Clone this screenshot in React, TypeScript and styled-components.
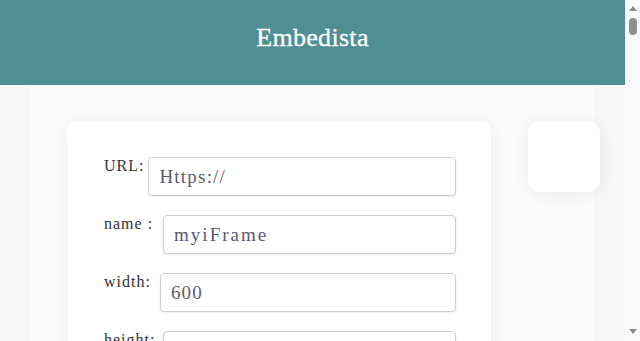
import React from "react";
import styled, { createGlobalStyle } from "styled-components";

const Global = createGlobalStyle`
  html, body { margin: 0; padding: 0; height: 100%; overflow: hidden; }
  body {
    background: #f7f7f7;
    font-family: "Liberation Serif", "DejaVu Serif", serif;
    color: #333;
  }
  #root { height: 100%; }
`;

const Page = styled.div`
  height: 100vh;
  display: flex;
`;

const Content = styled.div`
  flex: 1;
  min-width: 0;
  overflow: hidden;
`;

const ScrollTrack = styled.div`
  flex: none;
  width: 15px;
  background: #fafafa;
  display: flex;
  flex-direction: column;
  align-items: center;
  padding: 6px 0 7px;
  box-sizing: border-box;
`;

const Arrow = styled.div<{ $down?: boolean }>`
  width: 0;
  height: 0;
  border-left: 4px solid transparent;
  border-right: 4px solid transparent;
  ${(p) =>
    p.$down
      ? "border-top: 5px solid #8a8a8a; margin-top: auto;"
      : "border-bottom: 5px solid #8a8a8a;"}
`;

const Thumb = styled.div`
  width: 8px;
  height: 17px;
  margin-top: 7px;
  border-radius: 4px;
  background: #8f8f8f;
`;

const Header = styled.header`
  height: 85px;
  background: #4f8f94;
  display: flex;
  justify-content: center;
  align-items: center;
`;

const Title = styled.h1`
  margin: 0 0 9px 0;
  font-weight: 400;
  font-size: 26px;
  color: #fff;
  letter-spacing: 0.3px;
  -webkit-text-stroke: 0.3px #fff;
`;

const Main = styled.main`
  margin: 0 31px;
  background: #fbfbfb;
  padding-top: 36px;
  min-height: 700px;
  display: flex;
  align-items: flex-start;
  gap: 37px;
`;

const Card = styled.section`
  margin-left: 36px;
  width: 424px;
  flex: none;
  box-sizing: border-box;
  background: #fff;
  border-radius: 10px;
  box-shadow: 0 2px 18px rgba(0, 0, 0, 0.06);
  padding: 36px 35px 36px 37px;
  display: flex;
  flex-direction: column;
  gap: 19px;
`;

const Side = styled.aside`
  flex: none;
  width: 72px;
  height: 71px;
  background: #fff;
  border-radius: 12px;
  box-shadow: 0 2px 18px rgba(0, 0, 0, 0.07);
`;

const Row = styled.div`
  display: flex;
  align-items: flex-start;
`;

const Label = styled.label<{ $gap: number }>`
  font-size: 16px;
  line-height: 1;
  padding-top: 1px;
  margin-right: ${(p) => p.$gap}px;
  letter-spacing: 1px;
  color: #333;
  white-space: nowrap;
`;

const Input = styled.input<{ $spaced?: boolean }>`
  flex: 1;
  min-width: 0;
  height: 39px;
  box-sizing: border-box;
  border: 1px solid #cfcfcf;
  border-radius: 4px;
  box-shadow: 0 1px 2px rgba(0, 0, 0, 0.08);
  padding: 0 10px;
  font-family: "Liberation Serif", "DejaVu Serif", serif;
  font-size: 19px;
  color: #5b5b70;
  letter-spacing: ${(p) => (p.$spaced ? "2px" : "1.2px")};
  background: #fff;
  outline: none;
`;

const fields = [
  { label: "URL:", value: "Https://", gap: 4 },
  { label: "name :", value: "myiFrame", gap: 10, spaced: true },
  { label: "width:", value: "600", gap: 9 },
  { label: "height:", value: "400", gap: 8 },
];

export default function App() {
  return (
    <Page>
      <Global />
      <Content>
        <Header>
          <Title>Embedista</Title>
        </Header>
        <Main>
          <Card>
            {fields.map((f) => (
              <Row key={f.label}>
                <Label $gap={f.gap}>{f.label}</Label>
                <Input defaultValue={f.value} $spaced={f.spaced} />
              </Row>
            ))}
          </Card>
          <Side />
        </Main>
      </Content>
      <ScrollTrack aria-hidden>
        <Arrow />
        <Thumb />
        <Arrow $down />
      </ScrollTrack>
    </Page>
  );
}
